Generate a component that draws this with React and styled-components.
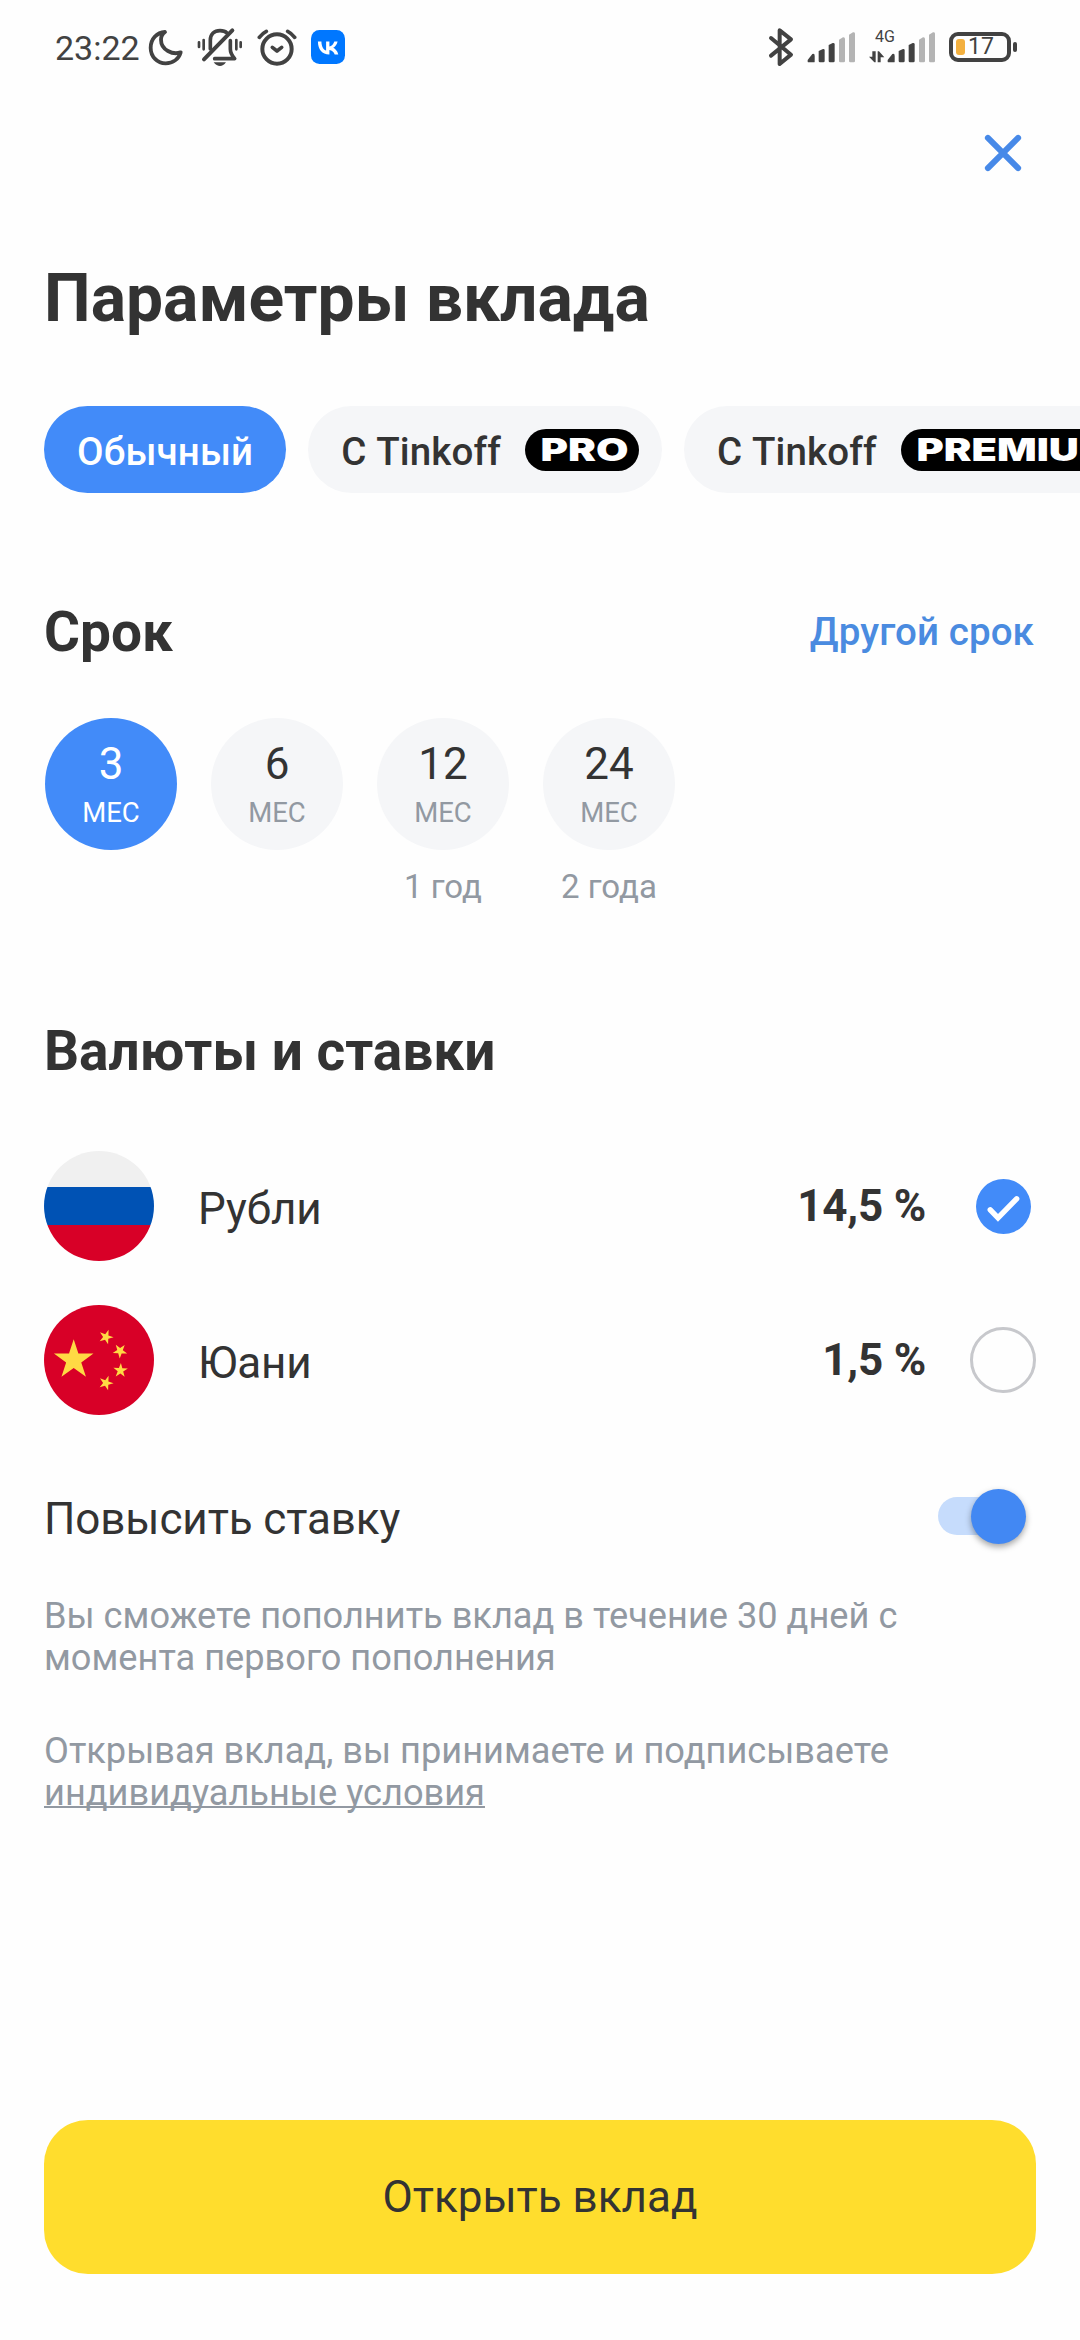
import React from "react";
import styled, { createGlobalStyle } from "styled-components";

const tariffs = [
  { label: "Обычный", active: true },
  { label: "С Tinkoff", badge: "PRO", width: 114, textWidth: 88 },
  { label: "С Tinkoff", badge: "PREMIUM", width: 232, textWidth: 202 },
];

const terms = [
  { value: 3, active: true },
  { value: 6 },
  { value: 12, caption: "1 год" },
  { value: 24, caption: "2 года" },
];

function MoonIcon() {
  return (
    <svg width="37" height="38" viewBox="350 52 111 114">
      <path
        d="M404 64C379 65 361 86 361 111C361 138 381 158 406 158C428 158 445 145 451 125C428 134 392 118 392 87C392 76 397 69 404 64Z"
        fill="none"
        stroke="#424242"
        strokeWidth="11.5"
        strokeLinejoin="round"
      />
    </svg>
  );
}

function MutedBellIcon() {
  return (
    <svg width="46" height="40" viewBox="501 52 138 120">
      <g fill="none" stroke="#424242" strokeWidth="11" strokeLinecap="round">
        <path d="M541 118V92C541 73 553 63 570 63C579 63 586 65 591 70" />
        <path d="M601 93V118C601 132 606 138 614 147H554" strokeLinejoin="round" />
        <path d="M607 62L522 149" strokeWidth="12" />
        <path d="M507 98V112M521 91V119M619 91V119M632 98V112" strokeWidth="8" />
      </g>
      <path d="M551 158H588C582 166 577 169 570 169S557 166 551 158Z" fill="#424242" />
    </svg>
  );
}

function AlarmIcon() {
  return (
    <svg width="40" height="38" viewBox="680 52 120 114">
      <g fill="none" stroke="#424242" strokeLinecap="round" strokeLinejoin="round">
        <circle cx="740" cy="115" r="44" strokeWidth="12" />
        <path d="M726 110L740 121L754 110" strokeWidth="11" />
        <path d="M687 80C693 72 700 66 708 62M793 80C787 72 780 66 772 62" strokeWidth="11" />
      </g>
    </svg>
  );
}

function VkIcon() {
  return (
    <svg width="34" height="34" viewBox="0 0 34 34">
      <rect width="34" height="34" rx="8.5" fill="#0077ff" />
      <path
        d="M18.1 24.4C11.2 24.4 7.1 19.5 6.9 11.4H10.4C10.5 17.3 13 19.9 15.1 20.4V11.4H18.4V16.5C20.4 16.3 22.6 13.9 23.3 11.4H26.6C26 14.5 23.8 16.9 22.2 17.8C23.8 18.6 26.4 20.6 27.3 24.4H23.7C22.9 22 21 20.2 18.4 19.9V24.4Z"
        fill="#fff"
      />
    </svg>
  );
}

function BluetoothIcon() {
  return (
    <svg width="26" height="40" viewBox="87 50 78 120">
      <path
        d="M96 83L156 133L122 161V60L156 87L96 136"
        fill="none"
        stroke="#424242"
        strokeWidth="12"
        strokeLinecap="round"
        strokeLinejoin="round"
      />
    </svg>
  );
}

function SignalBars() {
  return (
    <svg width="49" height="32" viewBox="0 0 147 96">
      <path d="M2 92V87L16 69Q23 66 23 74V92Q23 94 20 94H5Q2 94 2 92Z" fill="#424242" />
      <path d="M35 60L48 54Q53 53 53 58V90Q53 94 49 94H39Q35 94 35 90Z" fill="#424242" />
      <path d="M65 42L77 36Q83 35 83 40V90Q83 94 79 94H69Q65 94 65 90Z" fill="#424242" />
      <path d="M96 26L108 19Q114 18 114 24V90Q114 94 110 94H100Q96 94 96 90Z" fill="#b4b4b4" />
      <path d="M126 11L138 4Q144 2 144 8V90Q144 94 140 94H130Q126 94 126 90Z" fill="#b4b4b4" />
    </svg>
  );
}

function DataArrows() {
  return (
    <svg width="16" height="12" viewBox="386 122 48 36">
      <path d="M396 139V123H406V156H402L386 139Z" fill="#424242" />
      <path d="M412 156V123H416L432 141H421V156Z" fill="#424242" />
    </svg>
  );
}

function CloseIcon() {
  return (
    <svg width="38" height="38" viewBox="0 0 38 38">
      <path
        d="M3.9 3.9L34.1 34.1M34.1 3.9L3.9 34.1"
        stroke="#4789e8"
        strokeWidth="6"
        strokeLinecap="round"
      />
    </svg>
  );
}

function TariffBadge({ text, width, textWidth }) {
  return (
    <Badge width={width} height="42" viewBox={`0 0 ${width} 42`}>
      <rect width={width} height="42" rx="21" fill="#000" />
      <text x="15.5" y="32" textLength={textWidth} lengthAdjust="spacingAndGlyphs">
        {text}
      </text>
    </Badge>
  );
}

function RussiaFlag() {
  return (
    <Flag viewBox="0 0 110 110">
      <clipPath id="ru-circle">
        <circle cx="55" cy="55" r="55" />
      </clipPath>
      <g clipPath="url(#ru-circle)">
        <rect width="110" height="36" fill="#f0f0f0" />
        <rect y="36" width="110" height="38" fill="#0052b4" />
        <rect y="74" width="110" height="36" fill="#d80027" />
      </g>
    </Flag>
  );
}

const STAR = "0,-1 0.225,-0.309 0.951,-0.309 0.363,0.118 0.588,0.809 0,0.382 -0.588,0.809 -0.363,0.118 -0.951,-0.309 -0.225,-0.309";

function ChinaFlag() {
  return (
    <Flag viewBox="0 0 110 110">
      <circle cx="55" cy="55" r="55" fill="#d80027" />
      <g fill="#ffda44">
        <polygon points={STAR} transform="translate(29.7 55) scale(20.8)" />
        <polygon points={STAR} transform="translate(62 32) rotate(20) scale(7.6)" />
        <polygon points={STAR} transform="translate(76 46) rotate(38) scale(7.6)" />
        <polygon points={STAR} transform="translate(76.5 65.5) rotate(3) scale(7.6)" />
        <polygon points={STAR} transform="translate(62 78) rotate(20) scale(7.6)" />
      </g>
    </Flag>
  );
}

function App() {
  return (
    <Screen>
      <GlobalStyle />
      <StatusBar>
        <StatusLeft>
          <Clock>23:22</Clock>
          <MoonIcon />
          <MutedBellIcon />
          <AlarmIcon />
          <VkIcon />
        </StatusLeft>
        <StatusRight>
          <BluetoothIcon />
          <SignalBars />
          <MobileData>
            <Network>
              <span>4G</span>
              <DataArrows />
            </Network>
            <SignalBars />
          </MobileData>
          <Battery>
            <BatteryCase>
              <BatteryLevel />
              17
            </BatteryCase>
            <BatteryTip />
          </Battery>
        </StatusRight>
      </StatusBar>

      <TopBar>
        <CloseButton aria-label="Закрыть">
          <CloseIcon />
        </CloseButton>
      </TopBar>

      <Title>Параметры вклада</Title>

      <Tariffs>
        {tariffs.map((item, i) => (
          <Tariff key={i} $active={item.active} $withBadge={!!item.badge}>
            <span>{item.label}</span>
            {item.badge && (
              <TariffBadge text={item.badge} width={item.width} textWidth={item.textWidth} />
            )}
          </Tariff>
        ))}
      </Tariffs>

      <SectionHead>
        <SectionTitle>Срок</SectionTitle>
        <TermLink href="#">Другой срок</TermLink>
      </SectionHead>
      <Terms>
        {terms.map((term) => (
          <Term key={term.value}>
            <TermCircle $active={term.active}>
              <strong>{term.value}</strong>
              <small>МЕС</small>
            </TermCircle>
            {term.caption && <TermCaption>{term.caption}</TermCaption>}
          </Term>
        ))}
      </Terms>

      <SectionHead $currency>
        <SectionTitle>Валюты и ставки</SectionTitle>
      </SectionHead>
      <Currencies>
        <Currency>
          <RussiaFlag />
          <Label>Рубли</Label>
          <Rate>14,5 %</Rate>
          <RadioSlot>
            <Checked viewBox="0 0 55 55">
              <circle cx="27.5" cy="27.5" r="27.5" fill="#428bf9" />
              <path d="M14.3 30.8L22 38.8L40.6 19.8" />
            </Checked>
          </RadioSlot>
        </Currency>
        <Currency>
          <ChinaFlag />
          <Label>Юани</Label>
          <Rate>1,5 %</Rate>
          <RadioSlot>
            <Unchecked />
          </RadioSlot>
        </Currency>
      </Currencies>

      <SwitchRow>
        <Label>Повысить ставку</Label>
        <Track>
          <Thumb />
        </Track>
      </SwitchRow>

      <Note>
        Вы сможете пополнить вклад в течение 30 дней с<br />
        момента первого пополнения
      </Note>
      <Note>
        Открывая вклад, вы принимаете и подписываете
        <br />
        <a href="#">индивидуальные условия</a>
      </Note>

      <SubmitButton>Открыть вклад</SubmitButton>
    </Screen>
  );
}

const GlobalStyle = createGlobalStyle`
  * {
    box-sizing: border-box;
  }
  body {
    margin: 0;
    background: #fefefe;
  }
  svg {
    display: block;
    flex-shrink: 0;
  }
`;

const Screen = styled.main`
  display: flex;
  flex-direction: column;
  width: 1080px;
  height: 2340px;
  padding: 0 44px 66px;
  overflow: hidden;
  background: #fefefe;
  color: #333;
  font-family: Roboto, "Liberation Sans", sans-serif;
`;

const StatusBar = styled.header`
  display: flex;
  justify-content: space-between;
  height: 94px;
  margin: 0 -33px 0 11px;
  padding: 0 52px 0 0;
  color: #424242;
`;

const StatusLeft = styled.div`
  display: flex;
  align-items: center;
  svg:nth-of-type(2) {
    margin-left: 13px;
  }
  svg:nth-of-type(3) {
    margin-left: 14px;
  }
  svg:nth-of-type(4) {
    margin-left: 14px;
  }
`;

const Clock = styled.time`
  width: 92px;
  padding-top: 2px;
  font-size: 34px;
`;

const StatusRight = styled.div`
  display: flex;
  align-items: center;
  gap: 13px;
`;

const MobileData = styled.div`
  display: flex;
  align-items: flex-end;
  height: 32px;
`;

const Network = styled.div`
  display: flex;
  flex-direction: column;
  gap: 6px;
  width: 18px;
  font-size: 16px;
  line-height: 16px;
  span {
    margin-left: 6px;
  }
`;

const Battery = styled.div`
  display: flex;
  align-items: center;
  gap: 2px;
`;

const BatteryCase = styled.div`
  display: flex;
  align-items: center;
  gap: 3px;
  width: 62px;
  height: 30px;
  padding-left: 3px;
  border: 4px solid #424242;
  border-radius: 9px;
  font-size: 23px;
  line-height: 22px;
`;

const BatteryLevel = styled.i`
  width: 9px;
  height: 16px;
  border-radius: 3px;
  background: #f3b03f;
`;

const BatteryTip = styled.i`
  width: 4px;
  height: 10px;
  border-radius: 2px;
  background: #424242;
`;

const TopBar = styled.div`
  display: flex;
  align-items: center;
  justify-content: flex-end;
  height: 118px;
  padding-right: 14px;
`;

const CloseButton = styled.button`
  padding: 0;
  border: 0;
  background: none;
`;

const Title = styled.h1`
  margin: 48px 0 0;
  font-size: 66px;
  font-weight: 700;
  line-height: 78px;
`;

const Tariffs = styled.div`
  display: flex;
  gap: 22px;
  margin: 68px -44px 0 0;
  overflow: hidden;
`;

const Tariff = styled.button`
  display: flex;
  flex-shrink: 0;
  align-items: center;
  gap: 24px;
  height: 87px;
  padding: 0 ${(props) => (props.$withBadge ? 23 : 33)}px 0 33px;
  border: 0;
  border-radius: 44px;
  background: ${(props) => (props.$active ? "#428bf9" : "#f5f6f8")};
  color: ${(props) => (props.$active ? "#fff" : "#333")};
  font: 500 38.5px Roboto, sans-serif;
  letter-spacing: 0.14px;
  span {
    padding-top: 3px;
  }
`;

const Badge = styled.svg`
  text {
    fill: #fff;
    font-family: Inter, sans-serif;
    font-size: 31px;
    font-weight: 900;
    letter-spacing: 0;
  }
`;

const SectionHead = styled.div`
  display: flex;
  align-items: center;
  justify-content: space-between;
  height: 64px;
  margin-top: ${(props) => (props.$currency ? 112 : 107)}px;
`;

const SectionTitle = styled.h2`
  margin: 0;
  font-size: 55px;
  font-weight: 700;
  line-height: 64px;
`;

const TermLink = styled.a`
  padding: 0 2px 2px 0;
  color: #4a8be0;
  font-size: 38.5px;
  font-weight: 500;
  letter-spacing: 0.1px;
  text-decoration: none;
`;

const Terms = styled.div`
  display: flex;
  gap: 34px;
  height: 189px;
  margin-top: 54px;
  padding-left: 1px;
`;

const Term = styled.div`
  display: flex;
  flex-direction: column;
  align-items: center;
  width: 132px;
`;

const TermCircle = styled.div`
  display: flex;
  flex-shrink: 0;
  flex-direction: column;
  align-items: center;
  width: 132px;
  height: 132px;
  padding-top: 21px;
  border-radius: 50%;
  background: ${(props) => (props.$active ? "#428bf9" : "#f5f6f8")};
  color: ${(props) => (props.$active ? "#fff" : "#333")};
  strong {
    font-size: 44px;
    font-weight: 400;
    line-height: 50px;
  }
  small {
    margin-top: 8px;
    color: ${(props) => (props.$active ? "#fff" : "#9299a2")};
    font-size: 27.5px;
    line-height: 32px;
  }
`;

const TermCaption = styled.span`
  margin-top: 17px;
  color: #9299a2;
  font-size: 33px;
  line-height: 40px;
  white-space: nowrap;
`;

const Currencies = styled.div`
  margin-top: 46px;
`;

const Currency = styled.div`
  display: flex;
  align-items: center;
  height: 154px;
`;

const Flag = styled.svg`
  width: 110px;
  height: 110px;
  margin-right: 44px;
`;

const Label = styled.span`
  flex: 1;
  padding-top: 5px;
  font-size: 44px;
  letter-spacing: -0.1px;
`;

const Rate = styled.span`
  font-size: 44px;
  font-weight: 700;
  letter-spacing: -0.2px;
`;

const RadioSlot = styled.div`
  display: flex;
  justify-content: center;
  width: 66px;
  margin-left: 44px;
`;

const Checked = styled.svg`
  width: 55px;
  height: 55px;
  path {
    fill: none;
    stroke: #fff;
    stroke-width: 5.5px;
    stroke-linecap: round;
  }
`;

const Unchecked = styled.span`
  width: 66px;
  height: 66px;
  border: 3px solid #c7c8cc;
  border-radius: 50%;
`;

const SwitchRow = styled.div`
  display: flex;
  align-items: center;
  height: 158px;
  padding-right: 10px;
`;

const Track = styled.div`
  display: flex;
  align-items: center;
  justify-content: flex-end;
  width: 88px;
  height: 38px;
  border-radius: 19px;
  background: linear-gradient(90deg, #c6dcfc 70%, transparent 70%);
`;

const Thumb = styled.span`
  width: 55px;
  height: 55px;
  border-radius: 50%;
  background: #4288f3;
  box-shadow: 0 3px 6px rgba(0, 0, 0, 0.35);
`;

const Note = styled.p`
  margin: 0 0 51px;
  color: #9299a2;
  font-size: 36.2px;
  line-height: 42px;
  a {
    color: inherit;
    text-decoration-thickness: 2px;
    text-decoration-skip-ink: none;
  }
`;

const SubmitButton = styled.button`
  height: 154px;
  margin-top: auto;
  border: 0;
  border-radius: 44px;
  background: #ffdd2d;
  color: #333;
  font: 400 44px Roboto, sans-serif;
`;

export default App;
